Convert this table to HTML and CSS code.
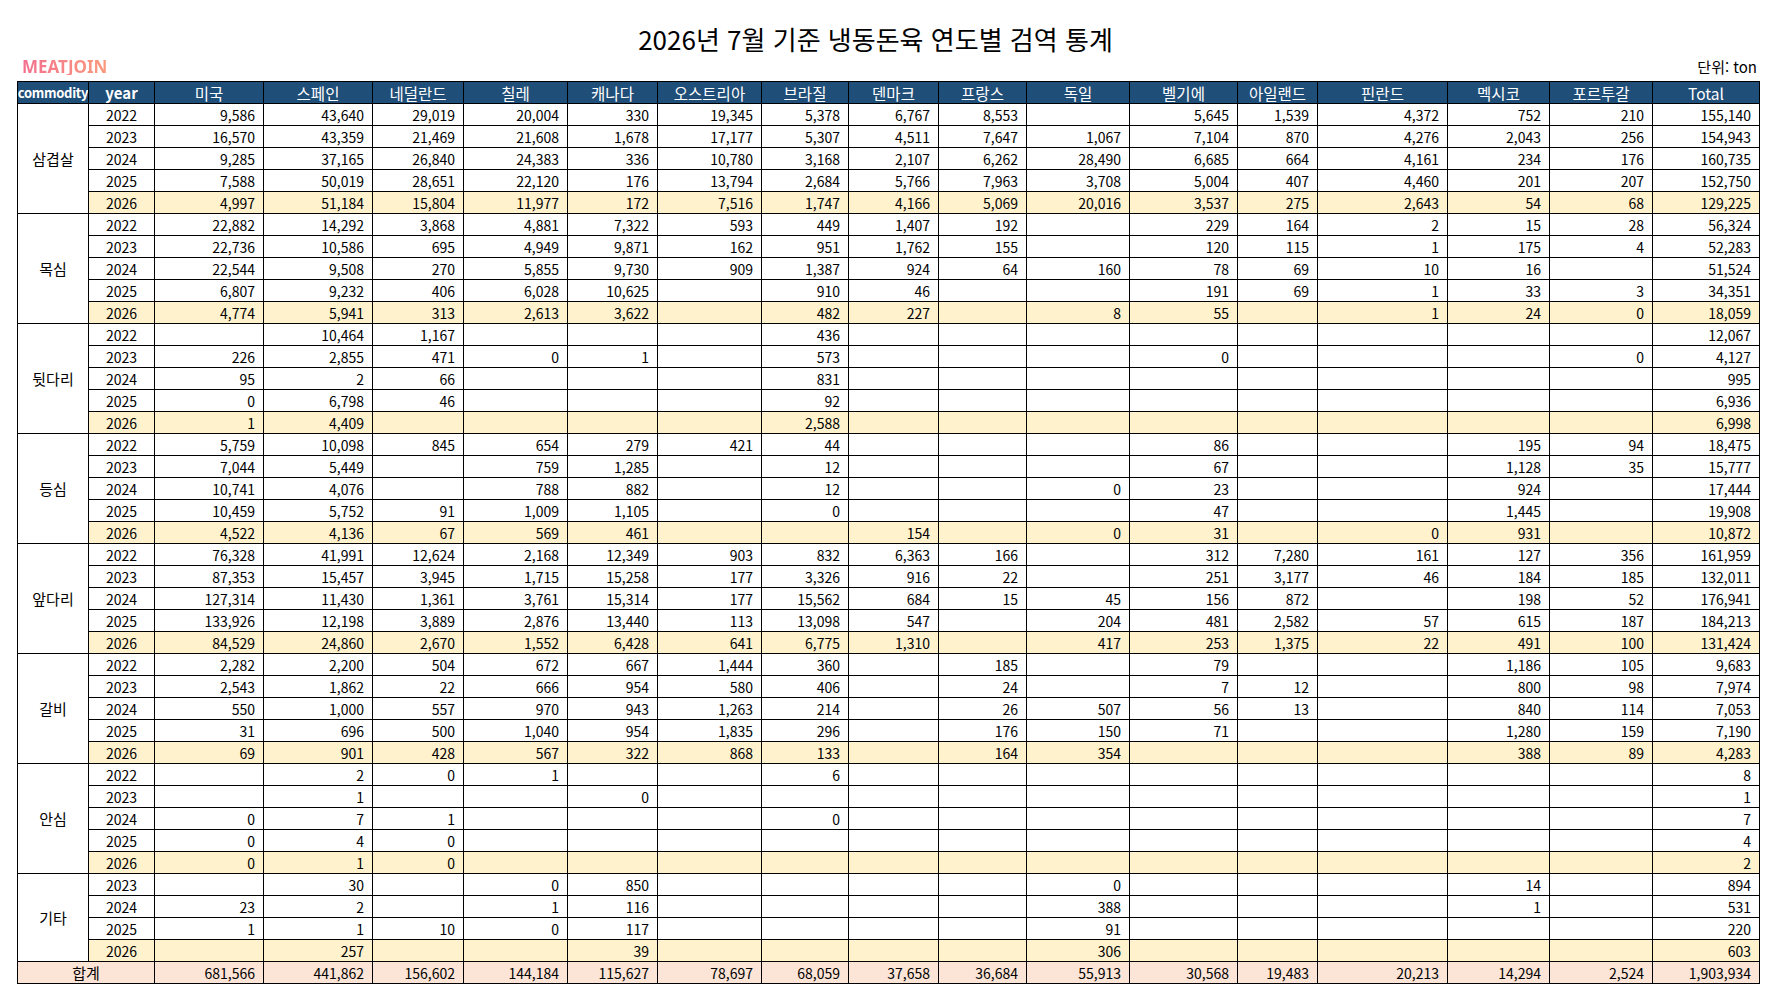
FILE: index.html
```html
<!DOCTYPE html>
<html lang="ko">
<head>
<meta charset="utf-8">
<title>2026년 7월 기준 냉동돈육 연도별 검역 통계</title>
<link rel="stylesheet" href="styles.css">
</head>
<body>
<div class="page">
  <h1 class="title">2026년 7월 기준 냉동돈육 연도별 검역 통계</h1>
  <div class="meta">
    <span class="brand">MEATJOIN</span>
    <span class="unit">단위: ton</span>
  </div>
  <table class="stats">
    <colgroup>
      <col class="w71"><col class="w66"><col class="w109"><col class="w109"><col class="w91"><col class="w104"><col class="w90"><col class="w104"><col class="w87"><col class="w90"><col class="w88"><col class="w103"><col class="w108"><col class="w80"><col class="w130"><col class="w102"><col class="w103"><col class="w107">
    </colgroup>
    <thead>
      <tr><th class="bold"><div class="clip">commodity</div></th><th class="bold">year</th><th>미국</th><th>스페인</th><th>네덜란드</th><th>칠레</th><th>캐나다</th><th>오스트리아</th><th>브라질</th><th>덴마크</th><th>프랑스</th><th>독일</th><th>벨기에</th><th>아일랜드</th><th>핀란드</th><th>멕시코</th><th>포르투갈</th><th>Total</th></tr>
    </thead>
    <tbody>
      <tr><td class="c" rowspan="5">삼겹살</td><td class="y">2022</td><td>9,586</td><td>43,640</td><td>29,019</td><td>20,004</td><td>330</td><td>19,345</td><td>5,378</td><td>6,767</td><td>8,553</td><td></td><td>5,645</td><td>1,539</td><td>4,372</td><td>752</td><td>210</td><td>155,140</td></tr>
      <tr><td class="y">2023</td><td>16,570</td><td>43,359</td><td>21,469</td><td>21,608</td><td>1,678</td><td>17,177</td><td>5,307</td><td>4,511</td><td>7,647</td><td>1,067</td><td>7,104</td><td>870</td><td>4,276</td><td>2,043</td><td>256</td><td>154,943</td></tr>
      <tr><td class="y">2024</td><td>9,285</td><td>37,165</td><td>26,840</td><td>24,383</td><td>336</td><td>10,780</td><td>3,168</td><td>2,107</td><td>6,262</td><td>28,490</td><td>6,685</td><td>664</td><td>4,161</td><td>234</td><td>176</td><td>160,735</td></tr>
      <tr><td class="y">2025</td><td>7,588</td><td>50,019</td><td>28,651</td><td>22,120</td><td>176</td><td>13,794</td><td>2,684</td><td>5,766</td><td>7,963</td><td>3,708</td><td>5,004</td><td>407</td><td>4,460</td><td>201</td><td>207</td><td>152,750</td></tr>
      <tr class="cur"><td class="y">2026</td><td>4,997</td><td>51,184</td><td>15,804</td><td>11,977</td><td>172</td><td>7,516</td><td>1,747</td><td>4,166</td><td>5,069</td><td>20,016</td><td>3,537</td><td>275</td><td>2,643</td><td>54</td><td>68</td><td>129,225</td></tr>

      <tr><td class="c" rowspan="5">목심</td><td class="y">2022</td><td>22,882</td><td>14,292</td><td>3,868</td><td>4,881</td><td>7,322</td><td>593</td><td>449</td><td>1,407</td><td>192</td><td></td><td>229</td><td>164</td><td>2</td><td>15</td><td>28</td><td>56,324</td></tr>
      <tr><td class="y">2023</td><td>22,736</td><td>10,586</td><td>695</td><td>4,949</td><td>9,871</td><td>162</td><td>951</td><td>1,762</td><td>155</td><td></td><td>120</td><td>115</td><td>1</td><td>175</td><td>4</td><td>52,283</td></tr>
      <tr><td class="y">2024</td><td>22,544</td><td>9,508</td><td>270</td><td>5,855</td><td>9,730</td><td>909</td><td>1,387</td><td>924</td><td>64</td><td>160</td><td>78</td><td>69</td><td>10</td><td>16</td><td></td><td>51,524</td></tr>
      <tr><td class="y">2025</td><td>6,807</td><td>9,232</td><td>406</td><td>6,028</td><td>10,625</td><td></td><td>910</td><td>46</td><td></td><td></td><td>191</td><td>69</td><td>1</td><td>33</td><td>3</td><td>34,351</td></tr>
      <tr class="cur"><td class="y">2026</td><td>4,774</td><td>5,941</td><td>313</td><td>2,613</td><td>3,622</td><td></td><td>482</td><td>227</td><td></td><td>8</td><td>55</td><td></td><td>1</td><td>24</td><td>0</td><td>18,059</td></tr>

      <tr><td class="c" rowspan="5">뒷다리</td><td class="y">2022</td><td></td><td>10,464</td><td>1,167</td><td></td><td></td><td></td><td>436</td><td></td><td></td><td></td><td></td><td></td><td></td><td></td><td></td><td>12,067</td></tr>
      <tr><td class="y">2023</td><td>226</td><td>2,855</td><td>471</td><td>0</td><td>1</td><td></td><td>573</td><td></td><td></td><td></td><td>0</td><td></td><td></td><td></td><td>0</td><td>4,127</td></tr>
      <tr><td class="y">2024</td><td>95</td><td>2</td><td>66</td><td></td><td></td><td></td><td>831</td><td></td><td></td><td></td><td></td><td></td><td></td><td></td><td></td><td>995</td></tr>
      <tr><td class="y">2025</td><td>0</td><td>6,798</td><td>46</td><td></td><td></td><td></td><td>92</td><td></td><td></td><td></td><td></td><td></td><td></td><td></td><td></td><td>6,936</td></tr>
      <tr class="cur"><td class="y">2026</td><td>1</td><td>4,409</td><td></td><td></td><td></td><td></td><td>2,588</td><td></td><td></td><td></td><td></td><td></td><td></td><td></td><td></td><td>6,998</td></tr>

      <tr><td class="c" rowspan="5">등심</td><td class="y">2022</td><td>5,759</td><td>10,098</td><td>845</td><td>654</td><td>279</td><td>421</td><td>44</td><td></td><td></td><td></td><td>86</td><td></td><td></td><td>195</td><td>94</td><td>18,475</td></tr>
      <tr><td class="y">2023</td><td>7,044</td><td>5,449</td><td></td><td>759</td><td>1,285</td><td></td><td>12</td><td></td><td></td><td></td><td>67</td><td></td><td></td><td>1,128</td><td>35</td><td>15,777</td></tr>
      <tr><td class="y">2024</td><td>10,741</td><td>4,076</td><td></td><td>788</td><td>882</td><td></td><td>12</td><td></td><td></td><td>0</td><td>23</td><td></td><td></td><td>924</td><td></td><td>17,444</td></tr>
      <tr><td class="y">2025</td><td>10,459</td><td>5,752</td><td>91</td><td>1,009</td><td>1,105</td><td></td><td>0</td><td></td><td></td><td></td><td>47</td><td></td><td></td><td>1,445</td><td></td><td>19,908</td></tr>
      <tr class="cur"><td class="y">2026</td><td>4,522</td><td>4,136</td><td>67</td><td>569</td><td>461</td><td></td><td></td><td>154</td><td></td><td>0</td><td>31</td><td></td><td>0</td><td>931</td><td></td><td>10,872</td></tr>

      <tr><td class="c" rowspan="5">앞다리</td><td class="y">2022</td><td>76,328</td><td>41,991</td><td>12,624</td><td>2,168</td><td>12,349</td><td>903</td><td>832</td><td>6,363</td><td>166</td><td></td><td>312</td><td>7,280</td><td>161</td><td>127</td><td>356</td><td>161,959</td></tr>
      <tr><td class="y">2023</td><td>87,353</td><td>15,457</td><td>3,945</td><td>1,715</td><td>15,258</td><td>177</td><td>3,326</td><td>916</td><td>22</td><td></td><td>251</td><td>3,177</td><td>46</td><td>184</td><td>185</td><td>132,011</td></tr>
      <tr><td class="y">2024</td><td>127,314</td><td>11,430</td><td>1,361</td><td>3,761</td><td>15,314</td><td>177</td><td>15,562</td><td>684</td><td>15</td><td>45</td><td>156</td><td>872</td><td></td><td>198</td><td>52</td><td>176,941</td></tr>
      <tr><td class="y">2025</td><td>133,926</td><td>12,198</td><td>3,889</td><td>2,876</td><td>13,440</td><td>113</td><td>13,098</td><td>547</td><td></td><td>204</td><td>481</td><td>2,582</td><td>57</td><td>615</td><td>187</td><td>184,213</td></tr>
      <tr class="cur"><td class="y">2026</td><td>84,529</td><td>24,860</td><td>2,670</td><td>1,552</td><td>6,428</td><td>641</td><td>6,775</td><td>1,310</td><td></td><td>417</td><td>253</td><td>1,375</td><td>22</td><td>491</td><td>100</td><td>131,424</td></tr>

      <tr><td class="c" rowspan="5">갈비</td><td class="y">2022</td><td>2,282</td><td>2,200</td><td>504</td><td>672</td><td>667</td><td>1,444</td><td>360</td><td></td><td>185</td><td></td><td>79</td><td></td><td></td><td>1,186</td><td>105</td><td>9,683</td></tr>
      <tr><td class="y">2023</td><td>2,543</td><td>1,862</td><td>22</td><td>666</td><td>954</td><td>580</td><td>406</td><td></td><td>24</td><td></td><td>7</td><td>12</td><td></td><td>800</td><td>98</td><td>7,974</td></tr>
      <tr><td class="y">2024</td><td>550</td><td>1,000</td><td>557</td><td>970</td><td>943</td><td>1,263</td><td>214</td><td></td><td>26</td><td>507</td><td>56</td><td>13</td><td></td><td>840</td><td>114</td><td>7,053</td></tr>
      <tr><td class="y">2025</td><td>31</td><td>696</td><td>500</td><td>1,040</td><td>954</td><td>1,835</td><td>296</td><td></td><td>176</td><td>150</td><td>71</td><td></td><td></td><td>1,280</td><td>159</td><td>7,190</td></tr>
      <tr class="cur"><td class="y">2026</td><td>69</td><td>901</td><td>428</td><td>567</td><td>322</td><td>868</td><td>133</td><td></td><td>164</td><td>354</td><td></td><td></td><td></td><td>388</td><td>89</td><td>4,283</td></tr>

      <tr><td class="c" rowspan="5">안심</td><td class="y">2022</td><td></td><td>2</td><td>0</td><td>1</td><td></td><td></td><td>6</td><td></td><td></td><td></td><td></td><td></td><td></td><td></td><td></td><td>8</td></tr>
      <tr><td class="y">2023</td><td></td><td>1</td><td></td><td></td><td>0</td><td></td><td></td><td></td><td></td><td></td><td></td><td></td><td></td><td></td><td></td><td>1</td></tr>
      <tr><td class="y">2024</td><td>0</td><td>7</td><td>1</td><td></td><td></td><td></td><td>0</td><td></td><td></td><td></td><td></td><td></td><td></td><td></td><td></td><td>7</td></tr>
      <tr><td class="y">2025</td><td>0</td><td>4</td><td>0</td><td></td><td></td><td></td><td></td><td></td><td></td><td></td><td></td><td></td><td></td><td></td><td></td><td>4</td></tr>
      <tr class="cur"><td class="y">2026</td><td>0</td><td>1</td><td>0</td><td></td><td></td><td></td><td></td><td></td><td></td><td></td><td></td><td></td><td></td><td></td><td></td><td>2</td></tr>

      <tr><td class="c" rowspan="4">기타</td><td class="y">2023</td><td></td><td>30</td><td></td><td>0</td><td>850</td><td></td><td></td><td></td><td></td><td>0</td><td></td><td></td><td></td><td>14</td><td></td><td>894</td></tr>
      <tr><td class="y">2024</td><td>23</td><td>2</td><td></td><td>1</td><td>116</td><td></td><td></td><td></td><td></td><td>388</td><td></td><td></td><td></td><td>1</td><td></td><td>531</td></tr>
      <tr><td class="y">2025</td><td>1</td><td>1</td><td>10</td><td>0</td><td>117</td><td></td><td></td><td></td><td></td><td>91</td><td></td><td></td><td></td><td></td><td></td><td>220</td></tr>
      <tr class="cur"><td class="y">2026</td><td></td><td>257</td><td></td><td></td><td>39</td><td></td><td></td><td></td><td></td><td>306</td><td></td><td></td><td></td><td></td><td></td><td>603</td></tr>
    </tbody>
    <tfoot>
      <tr class="sum"><td class="c" colspan="2">합계</td><td>681,566</td><td>441,862</td><td>156,602</td><td>144,184</td><td>115,627</td><td>78,697</td><td>68,059</td><td>37,658</td><td>36,684</td><td>55,913</td><td>30,568</td><td>19,483</td><td>20,213</td><td>14,294</td><td>2,524</td><td>1,903,934</td></tr>
    </tfoot>
  </table>
</div>
</body>
</html>
```

FILE: styles.css
```css
html, body {
  margin: 0;
  padding: 0;
  background: #ffffff;
}

body {
  font-family: "Noto Sans CJK KR", "Noto Sans", sans-serif;
  color: #000000;
}

.page {
  padding-left: 17px;
  width: 1743px;
}

.title {
  margin: 0;
  padding-top: 26px;
  height: 25px;
  line-height: 25px;
  font-size: 26px;
  font-weight: 400;
  text-align: center;
  padding-right: 26px;
}

.meta {
  display: flex;
  justify-content: space-between;
  align-items: flex-end;
  height: 30px;
  box-sizing: border-box;
  padding: 0 3px 6px 5px;
}

.brand {
  font-family: "Noto Sans", sans-serif;
  font-weight: 700;
  font-size: 17px;
  line-height: 17px;
  background: linear-gradient(90deg, #f4708f, #fb9a7c);
  -webkit-background-clip: text;
  background-clip: text;
  color: transparent;
}

.unit {
  font-size: 15px;
  line-height: 16px;
}

.stats {
  border-collapse: collapse;
  table-layout: fixed;
  width: 1743px;
  font-size: 14px;
}

.w66 { width: 66px; }
.w71 { width: 71px; }
.w80 { width: 80px; }
.w87 { width: 87px; }
.w88 { width: 88px; }
.w90 { width: 90px; }
.w91 { width: 91px; }
.w102 { width: 102px; }
.w103 { width: 103px; }
.w104 { width: 104px; }
.w107 { width: 107px; }
.w108 { width: 108px; }
.w109 { width: 109px; }
.w130 { width: 130px; }

.stats tr {
  height: 22px;
}

.stats th,
.stats td {
  border: 1px solid #000000;
  height: 22px;
  padding: 0 8px 0 4px;
  line-height: 20px;
  white-space: nowrap;
  overflow: hidden;
  box-sizing: border-box;
}

.stats th {
  background: #1f4e78;
  color: #ffffff;
  font-weight: 400;
  font-size: 15.5px;
  text-align: center;
  padding: 0;
}

.stats th.bold {
  font-weight: 700;
  font-size: 15px;
}

.stats th.bold .clip {
  font-size: 13px;
  letter-spacing: -0.3px;
}

.clip {
  display: flex;
  justify-content: center;
  overflow: hidden;
}

.stats td {
  text-align: right;
}

.stats td.y {
  text-align: center;
  padding: 0;
}

.stats td.c {
  text-align: center;
  padding: 0;
  font-size: 15px;
}

.stats tr.cur td {
  background: #fff2cc;
}

.stats tr.sum td {
  background: #fce4d6;
}
```
